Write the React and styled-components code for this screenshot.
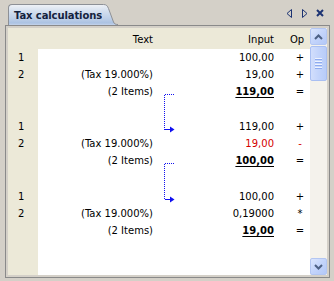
import React from 'react';
import styled, { createGlobalStyle } from 'styled-components';

const Global = createGlobalStyle`
  html, body { margin: 0; padding: 0; }
  body {
    background: #d4d0c8;
    width: 334px;
    height: 281px;
    overflow: hidden;
    font-family: "DejaVu Sans", Verdana, sans-serif;
    font-size: 10px;
    color: #000;
  }
`;

const Window = styled.div`
  width: 334px;
  height: 281px;
  display: flex;
  flex-direction: column;
`;

const TabStrip = styled.div`
  height: 25px;
  flex: none;
  display: flex;
  align-items: flex-end;
  padding: 0 10px 0 8px;
  box-sizing: border-box;
`;

const Tab = styled.div`
  display: flex;
  height: 21px;
`;

const TabBody = styled.div`
  height: 21px;
  box-sizing: border-box;
  border-top: 1px solid #8d9096;
  border-left: 1px solid #8d9096;
  border-top-left-radius: 4px;
  padding-left: 5px;
  display: flex;
  align-items: center;
  background: linear-gradient(#eef1f6 0%, #d5e0ef 30%, #bccee7 70%, #abc2e2 90%, #c4d3ea 100%);
  font-weight: bold;
  letter-spacing: -0.1px;
  color: #14223d;
  white-space: nowrap;
`;

const TabEdge = styled.svg`
  display: block;
  flex: none;
`;

const Controls = styled.div`
  margin-left: auto;
  align-self: center;
  display: flex;
  align-items: center;
  gap: 8px;
  padding-top: 1px;
`;

const Panel = styled.div`
  flex: 1;
  margin: 0 4px 3px 5px;
  border: 1px solid #8a8a8a;
  padding: 2px;
  display: flex;
  min-height: 0;
`;

const Table = styled.div`
  flex: 1;
  display: flex;
  flex-direction: column;
  min-width: 0;
`;

const cols = '30px 120px 22px 110px 20px';

const HeaderRow = styled.div`
  height: 21px;
  flex: none;
  display: grid;
  grid-template-columns: ${cols};
  align-items: center;
  background: #ece9d8;
`;

const HeadCell = styled.div`
  grid-column: ${p => p.$col};
  text-align: ${p => p.$align || 'right'};
  padding-right: ${p => p.$pr || 0}px;
  padding-top: 1px;
`;

const Body = styled.div`
  flex: 1;
  display: grid;
  grid-template-columns: ${cols};
  grid-template-rows: ${p => p.$rows};
  align-content: start;
  background: linear-gradient(to right, #ece9d8 30px, #ffffff 30px);
`;

const Cell = styled.div`
  grid-column: ${p => p.$col};
  grid-row: ${p => p.$row};
  display: flex;
  align-items: center;
  white-space: nowrap;
`;

const NumCell = styled(Cell)`
  padding-left: 10px;
`;

const TextCell = styled(Cell)`
  justify-content: flex-end;
  padding-right: 5px;
`;

const InputCell = styled(Cell)`
  justify-content: flex-end;
  padding-right: 16px;
  color: ${p => (p.$neg ? '#d40000' : '#000')};
  font-weight: ${p => (p.$total ? 'bold' : 'normal')};
  text-decoration: ${p => (p.$total ? 'underline' : 'none')};
  text-underline-offset: 2px;
`;

const OpCell = styled(Cell)`
  justify-content: center;
  color: ${p => (p.$neg ? '#d40000' : '#000')};
`;

const Connector = styled.svg`
  grid-column: 3;
  grid-row: ${p => p.$row};
  display: block;
`;

const Scrollbar = styled.div`
  width: 17px;
  flex: none;
  display: flex;
  flex-direction: column;
  background: #f4f2ec;
`;

const ScrollButton = styled.div`
  width: 17px;
  height: 17px;
  box-sizing: border-box;
  border: 1px solid #b3c6f2;
  border-radius: 2px;
  background: linear-gradient(135deg, #dbe6fd 0%, #c3d4fb 50%, #b3c8f7 100%);
  display: flex;
  align-items: center;
  justify-content: center;
`;

const Track = styled.div`
  flex: 1;
  padding-top: 1px;
`;

const Thumb = styled.div`
  width: 17px;
  height: 35px;
  box-sizing: border-box;
  border: 1px solid #a9bff2;
  border-radius: 2px;
  background: linear-gradient(to right, #d2defc 0%, #c3d4fb 50%, #b8ccf8 100%);
  display: flex;
  flex-direction: column;
  align-items: center;
  justify-content: center;
  gap: 1px;
`;

const Grip = styled.div`
  width: 7px;
  height: 1px;
  background: #eef3fe;
  box-shadow: 0 1px 0 #8eabef;
  margin-bottom: 1px;
`;

const groups = [
  {
    rows: [
      { n: '1', text: '', input: '100,00', op: '+' },
      { n: '2', text: '(Tax 19.000%)', input: '19,00', op: '+' },
    ],
    total: '119,00',
  },
  {
    rows: [
      { n: '1', text: '', input: '119,00', op: '+' },
      { n: '2', text: '(Tax 19.000%)', input: '19,00', op: '-', neg: true },
    ],
    total: '100,00',
  },
  {
    rows: [
      { n: '1', text: '', input: '100,00', op: '+' },
      { n: '2', text: '(Tax 19.000%)', input: '0,19000', op: '*' },
    ],
    total: '19,00',
  },
];

const blankHeights = [18, 19];

function Link({ row, blank }) {
  const h = 17 + blank + 17;
  const y1 = 11.5;
  const y2 = 17 + blank + 11.5;
  return (
    <Connector $row={`${row} / span 3`} width="22" height={h} viewBox={`0 0 22 ${h}`} shapeRendering="crispEdges">
      <line x1="6.5" y1={y1} x2="17" y2={y1} stroke="#1010f0" strokeDasharray="1 1" />
      <line x1="6.5" y1={y1} x2="6.5" y2={y2} stroke="#1010f0" strokeDasharray="1 1" />
      <line x1="6.5" y1={y2} x2="13" y2={y2} stroke="#1010f0" />
      <polygon points={`12,${y2 - 3} 16.5,${y2} 12,${y2 + 3}`} fill="#1010f0" shapeRendering="auto" />
    </Connector>
  );
}

export default function App() {
  const rowHeights = [];
  const cells = [];
  let r = 1;
  groups.forEach((g, gi) => {
    g.rows.forEach((row, ri) => {
      rowHeights.push('17px');
      cells.push(
        <NumCell key={`n${gi}${ri}`} $col={1} $row={r}>{row.n}</NumCell>,
        <TextCell key={`t${gi}${ri}`} $col={2} $row={r}>{row.text}</TextCell>,
        <InputCell key={`i${gi}${ri}`} $col={4} $row={r} $neg={row.neg}>{row.input}</InputCell>,
        <OpCell key={`o${gi}${ri}`} $col={5} $row={r} $neg={row.neg}>{row.op}</OpCell>
      );
      r += 1;
    });
    rowHeights.push('17px');
    cells.push(
      <TextCell key={`tt${gi}`} $col={2} $row={r}>(2 Items)</TextCell>,
      <InputCell key={`it${gi}`} $col={4} $row={r} $total>{g.total}</InputCell>,
      <OpCell key={`ot${gi}`} $col={5} $row={r}>=</OpCell>
    );
    if (gi < groups.length - 1) {
      cells.push(<Link key={`l${gi}`} row={r} blank={blankHeights[gi]} />);
      r += 1;
      rowHeights.push(`${blankHeights[gi]}px`);
    }
    r += 1;
  });

  return (
    <Window>
      <Global />
      <TabStrip>
        <Tab>
          <TabBody>Tax calculations</TabBody>
          <TabEdge width="16" height="21" viewBox="0 0 16 21">
            <defs>
              <linearGradient id="tabg" x1="0" y1="0" x2="0" y2="1">
                <stop offset="0" stopColor="#eef1f6" />
                <stop offset="0.3" stopColor="#d5e0ef" />
                <stop offset="0.7" stopColor="#bccee7" />
                <stop offset="0.9" stopColor="#abc2e2" />
                <stop offset="1" stopColor="#c4d3ea" />
              </linearGradient>
            </defs>
            <path d="M0 0.5 H1.5 C4.5 0.5 5.5 2 6.5 4.5 L11.5 18 C12.2 19.8 13.5 20.5 16 20.5 V21 H0 Z" fill="url(#tabg)" />
            <path d="M0 0.5 H1.5 C4.5 0.5 5.5 2 6.5 4.5 L11.5 18 C12.2 19.8 13.5 20.5 16 20.5" fill="none" stroke="#8d9096" />
          </TabEdge>
        </Tab>
        <Controls>
          <svg width="7" height="9" viewBox="0 0 7 9">
            <path d="M5.5 0.5 L1 4.5 L5.5 8.5 Z" fill="none" stroke="#1c3373" strokeLinejoin="miter" />
          </svg>
          <svg width="7" height="9" viewBox="0 0 7 9">
            <path d="M1.5 0.5 L6 4.5 L1.5 8.5 Z" fill="none" stroke="#1c3373" strokeLinejoin="miter" />
          </svg>
          <svg width="8" height="8" viewBox="0 0 8 8">
            <path d="M1 1 L7 7 M7 1 L1 7" stroke="#1c3373" strokeWidth="2" />
          </svg>
        </Controls>
      </TabStrip>
      <Panel>
        <Table>
          <HeaderRow>
            <HeadCell $col={2} $pr={5}>Text</HeadCell>
            <HeadCell $col={4} $pr={16}>Input</HeadCell>
            <HeadCell $col={5} $align="left">Op</HeadCell>
          </HeaderRow>
          <Body $rows={rowHeights.join(' ')}>{cells}</Body>
        </Table>
        <Scrollbar>
          <ScrollButton>
            <svg width="9" height="6" viewBox="0 0 9 6">
              <path d="M1 5 L4.5 1.5 L8 5" fill="none" stroke="#4d6185" strokeWidth="2" />
            </svg>
          </ScrollButton>
          <Track>
            <Thumb>
              <Grip />
              <Grip />
              <Grip />
              <Grip />
            </Thumb>
          </Track>
          <ScrollButton>
            <svg width="9" height="6" viewBox="0 0 9 6">
              <path d="M1 1 L4.5 4.5 L8 1" fill="none" stroke="#4d6185" strokeWidth="2" />
            </svg>
          </ScrollButton>
        </Scrollbar>
      </Panel>
    </Window>
  );
}
